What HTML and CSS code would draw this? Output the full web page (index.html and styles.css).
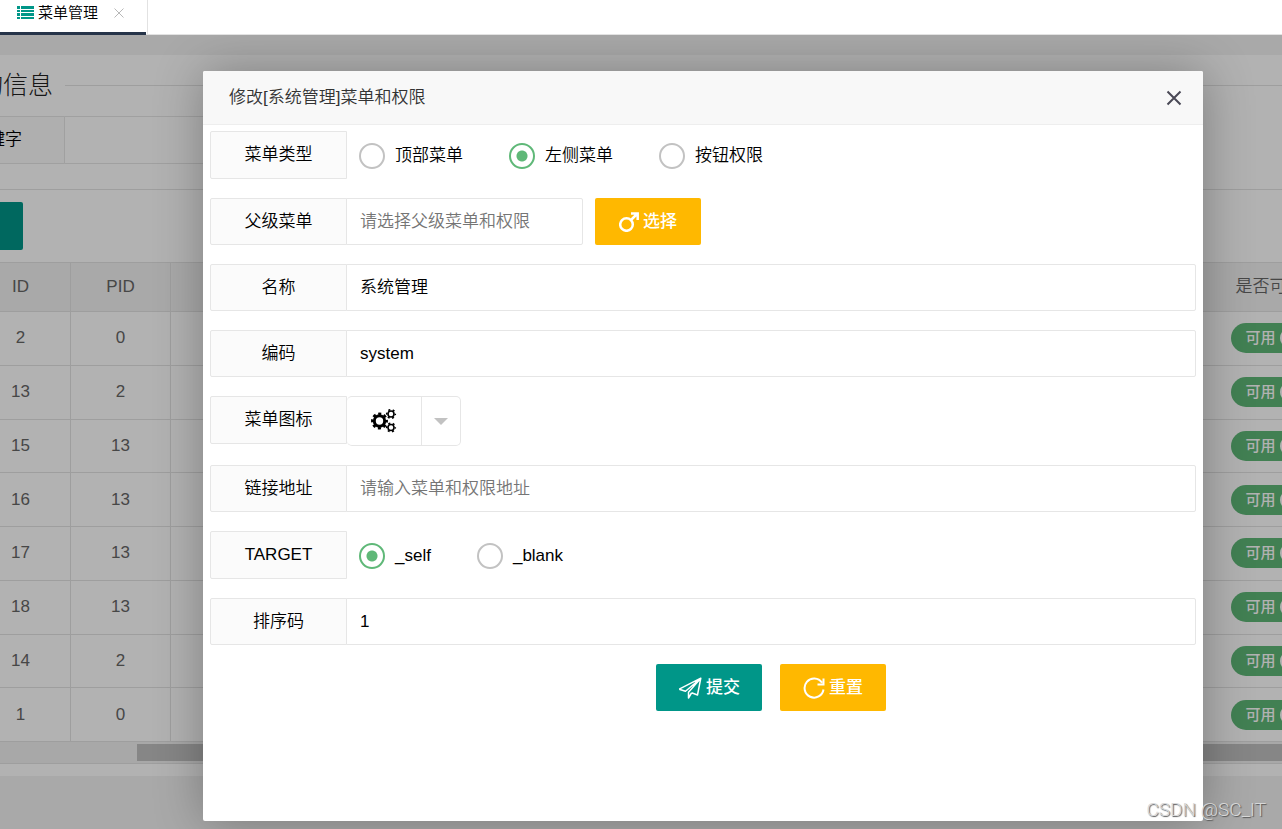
FILE: index.html
```html
<!DOCTYPE html>
<html lang="zh-CN">
<head>
<meta charset="utf-8">
<title>菜单管理</title>
<link rel="stylesheet" href="styles.css">
</head>
<body>
<nav class="tabs">
  <div class="tab">
    <svg class="tab-icon" viewBox="0 0 17 14" aria-hidden="true"><path d="M0 0h3v3H0zM4 0h13v3H4zM0 4h3v2H0zM4 4h13v2H4zM0 7h3v3H0zM4 7h13v3H4zM0 11h3v2H0zM4 11h13v2H4z"/></svg>
    <span>菜单管理</span>
    <button class="tab-close" type="button" aria-label="关闭标签"><svg viewBox="0 0 10 10"><path d="M0.5 0.5l9 9M9.500 0.5l-9 9"/></svg></button>
  </div>
</nav>
<main class="frame">
  <section class="card">
    <div class="card-inner">
      <h2 class="legend"><span>查询信息</span></h2>
      <div class="search">
        <label class="label search-label" for="kw">关键字</label>
        <input class="input" id="kw" type="text">
      </div>
      <hr class="rule">
      <button class="add" type="button" aria-label="添加"></button>
      <table class="grid">
        <colgroup><col class="c-check"><col class="c-id"><col class="c-id"><col><col class="c-state"></colgroup>
        <thead><tr><th></th><th>ID</th><th>PID</th><th></th><th>是否可用</th></tr></thead>
        <tbody>
          <tr><td></td><td>2</td><td>0</td><td></td><td><button type="button" class="switch">可用</button></td></tr>
          <tr><td></td><td>13</td><td>2</td><td></td><td><button type="button" class="switch">可用</button></td></tr>
          <tr><td></td><td>15</td><td>13</td><td></td><td><button type="button" class="switch">可用</button></td></tr>
          <tr><td></td><td>16</td><td>13</td><td></td><td><button type="button" class="switch">可用</button></td></tr>
          <tr><td></td><td>17</td><td>13</td><td></td><td><button type="button" class="switch">可用</button></td></tr>
          <tr><td></td><td>18</td><td>13</td><td></td><td><button type="button" class="switch">可用</button></td></tr>
          <tr><td></td><td>14</td><td>2</td><td></td><td><button type="button" class="switch">可用</button></td></tr>
          <tr><td></td><td>1</td><td>0</td><td></td><td><button type="button" class="switch">可用</button></td></tr>
        </tbody>
      </table>
      <div class="scrollbar"><div class="thumb"></div></div>
    </div>
  </section>
  <div class="overlay">
    <div class="dialog" role="dialog" aria-labelledby="dlg-title">
      <header class="dialog-head">
        <h1 id="dlg-title">修改[系统管理]菜单和权限</h1>
        <button class="dialog-close" type="button" aria-label="关闭"><svg viewBox="0 0 16 16"><path d="M1.500 1.500l13 13M14.500 1.500l-13 13"/></svg></button>
      </header>
      <form class="form">
        <div class="row row-radio" role="radiogroup" aria-labelledby="l-type">
          <span class="label" id="l-type">菜单类型</span>
          <div class="options">
            <label><input type="radio" name="type">顶部菜单</label>
            <label><input type="radio" name="type" checked>左侧菜单</label>
            <label><input type="radio" name="type">按钮权限</label>
          </div>
        </div>
        <div class="row">
          <label class="label" for="parent">父级菜单</label>
          <input class="input input-short" id="parent" type="text" placeholder="请选择父级菜单和权限">
          <button class="btn btn-warm btn-pick" type="button"><svg class="i-male" viewBox="0 0 20 20"><circle cx="7.500" cy="12.500" r="6.300"/><path d="M12 8l6-6M12 1.500h6.700v6.500"/></svg>选择</button>
        </div>
        <div class="row">
          <label class="label" for="name">名称</label>
          <input class="input" id="name" type="text" value="系统管理">
        </div>
        <div class="row">
          <label class="label" for="code">编码</label>
          <input class="input" id="code" type="text" value="system">
        </div>
        <div class="row row-icon">
          <span class="label" id="l-icon">菜单图标</span>
          <button class="picker" type="button" aria-labelledby="l-icon">
            <span class="picker-icon"><svg viewBox="0 0 26 24"><circle class="g1" cx="8.500" cy="12" r="5.200"/><circle class="t1" cx="8.500" cy="12" r="7.200"/><circle class="g2" cx="20" cy="5" r="3"/><circle class="t2" cx="20" cy="5" r="4.300"/><circle class="g2" cx="20" cy="18.500" r="3"/><circle class="t2" cx="20" cy="18.500" r="4.300"/></svg></span>
            <span class="picker-arrow"><svg viewBox="0 0 14 7"><path d="M0 0h14l-7 7z"/></svg></span>
          </button>
        </div>
        <div class="row">
          <label class="label" for="href">链接地址</label>
          <input class="input" id="href" type="text" placeholder="请输入菜单和权限地址">
        </div>
        <div class="row row-radio" role="radiogroup" aria-labelledby="l-target">
          <span class="label" id="l-target">TARGET</span>
          <div class="options">
            <label><input type="radio" name="target" checked>_self</label>
            <label><input type="radio" name="target">_blank</label>
          </div>
        </div>
        <div class="row">
          <label class="label" for="order">排序码</label>
          <input class="input" id="order" type="text" value="1">
        </div>
        <div class="actions">
          <button class="btn btn-main" type="button"><svg class="i-plane" viewBox="0 0 24 22"><path d="M1.200 12.200L22.800 1.200L19.500 18L13.500 15.800M1.200 12.200L7.500 14.300L22.800 1.200L10.500 15.300V21L13.500 16"/></svg>提交</button>
          <button class="btn btn-warm" type="reset"><svg class="i-line" viewBox="0 0 22 22"><path d="M20.500 12.500A9.500 9.500 0 1 1 19 5.800M20.500 1.500v6h-6"/></svg>重置</button>
        </div>
      </form>
    </div>
  </div>
</main>
<div class="watermark">CSDN @SC_IT</div>
</body>
</html>
```
FILE: styles.css
```css
* { box-sizing: border-box; }

body {
  margin: 0;
  min-height: 100vh;
  display: flex;
  flex-direction: column;
  overflow: hidden;
  position: relative;
  font-family: "Liberation Sans", "Noto Sans CJK SC", sans-serif;
  font-size: 17px;
  font-weight: 350;
  line-height: 24px;
  color: #000;
  background: #f2f2f2;
}

button, input { font: inherit; color: inherit; margin: 0; }
button { border: 0; padding: 0; cursor: pointer; }
svg { display: block; }

/* tab strip */
.tabs {
  height: 35px;
  display: flex;
  background: #fff;
  border-bottom: 1px solid #e2e2e2;
}
.tab {
  display: flex;
  align-items: center;
  gap: 4px;
  width: 148px;
  height: 35px;
  padding: 0 0 10px 17px;
  border-right: 1px solid #e2e2e2;
  font-size: 15px;
  background: linear-gradient(#263449, #263449) 0 100% / 146px 3px no-repeat;
}
.tab-icon { width: 17px; height: 14px; fill: #009688; }
.tab-close { margin-left: 12px; background: none; }
.tab-close svg { width: 10px; height: 10px; stroke: #b8b8b8; fill: none; }

/* page behind the dialog */
.frame { flex: 1; position: relative; overflow: hidden; padding-top: 20px; }
.card { background: #fff; padding-bottom: 12px; }
.card-inner { margin: 0 -58px 0 -72px; padding-top: 14px; }
.legend {
  display: flex;
  align-items: center;
  gap: 12px;
  margin: 0;
  padding-left: 25px;
  font-size: 25px;
  font-weight: 200;
  line-height: 33px;
  color: #222;
}
.legend::after { content: ""; flex: 1; border-top: 1px solid #e2e2e2; }
.search { display: flex; width: 60%; height: 48px; margin-top: 14px; }
.rule { margin: 25px 0 12px; border: 0; border-top: 1px solid #e2e2e2; }
.add { display: block; width: 95px; height: 48px; border-radius: 2px; background: #009688; }

.grid {
  width: 100%;
  height: 480px;
  margin-top: 12px;
  table-layout: fixed;
  border-collapse: collapse;
  color: #666;
  text-align: center;
}
.c-check { width: 42px; }
.c-id { width: 100px; }
.c-state { width: 140px; }
.grid th, .grid td { padding: 0; border: 1px solid #e2e2e2; }
.grid th { height: 49px; font-weight: 350; background: #f2f2f2; }
.grid tr > :last-child { border-left: 0; }
.switch {
  display: block;
  position: relative;
  width: 78px;
  height: 30px;
  margin: 0 auto;
  padding-left: 15px;
  border-radius: 15px;
  background: #5fb878;
  color: #fff;
  font-size: 15px;
  font-weight: 500;
  text-align: left;
}
.switch::after {
  content: "";
  position: absolute;
  top: 5px;
  right: 9px;
  width: 20px;
  height: 20px;
  border-radius: 50%;
  background: #fff;
}
.scrollbar { height: 22px; padding: 2px 0 3px 209px; background: #f1f1f1; border-bottom: 1px solid #e2e2e2; }
.thumb { height: 17px; background: #c1c1c1; }

/* dialog */
.overlay {
  position: absolute;
  inset: 0;
  display: flex;
  padding: 36px 79px 8px 203px;
  background: rgba(0, 0, 0, .3);
}
.dialog {
  flex: 1;
  min-width: 0;
  background: #fff;
  border-radius: 2px;
  box-shadow: 1px 1px 50px rgba(0, 0, 0, .3);
}
.dialog-head {
  display: flex;
  justify-content: space-between;
  align-items: center;
  height: 54px;
  padding: 0 21px 0 26px;
  border-bottom: 1px solid #eee;
  border-radius: 2px 2px 0 0;
  background: #f8f8f8;
}
.dialog-head h1 { margin: 0; font-size: 17px; font-weight: 350; color: #333; }
.dialog-close { background: none; }
.dialog-close svg { width: 16px; height: 16px; stroke: #4a4956; stroke-width: 2; fill: none; }

.form { display: flex; flex-direction: column; gap: 19px; padding: 6px 7px; }
.row { display: flex; height: 47px; }
.row-radio { height: 48px; }
.row-icon { height: 50px; }
.row-icon .label { height: 48px; }
.label {
  flex: none;
  display: flex;
  align-items: center;
  justify-content: center;
  width: 137px;
  border: 1px solid #e6e6e6;
  border-radius: 2px 0 0 2px;
  background: #fbfbfb;
}
.input {
  flex: 1;
  min-width: 0;
  margin-left: -1px;
  padding: 0 13px;
  border: 1px solid #e6e6e6;
  border-radius: 0 2px 2px 0;
  background: #fff;
}
.input::placeholder { color: #757575; opacity: 1; }
.input-short { flex: 0 0 237px; }

.options { display: flex; align-items: center; gap: 46px; padding: 1px 0 0 12px; }
.options label { display: flex; align-items: center; gap: 10px; }
.options input {
  appearance: none;
  width: 26px;
  height: 26px;
  border: 2px solid #c2c2c2;
  border-radius: 50%;
}
.options input:checked {
  border-color: #5fb878;
  background: radial-gradient(circle, #5fb878 5px, transparent 6px);
}

.btn {
  display: flex;
  align-items: center;
  justify-content: center;
  gap: 4px;
  width: 106px;
  height: 47px;
  border-radius: 2px;
  color: #fff;
  font-weight: 500;
}
.btn svg { fill: none; stroke: #fff; }
.btn-main { background: #009688; }
.btn-warm { background: #ffb800; }
.btn-pick { margin-left: 12px; }
.i-male { width: 20px; height: 20px; stroke-width: 2.5; }
.i-line { width: 22px; height: 22px; stroke-width: 2; }
.i-plane { width: 24px; height: 22px; stroke-width: 1.5; stroke-linejoin: round; }
.actions { display: flex; justify-content: center; gap: 18px; padding-left: 136px; }

.picker {
  display: flex;
  width: 114px;
  border: 1px solid #e6e6e6;
  border-left: 0;
  border-radius: 5px;
  background: #fff;
}
.picker-icon, .picker-arrow { display: flex; align-items: center; justify-content: center; height: 100%; }
.picker-icon { flex: 1; }
.picker-arrow { width: 39px; border-left: 1px solid #e6e6e6; }
.picker-icon svg { width: 26px; height: 24px; fill: none; stroke: #000; }
.picker-arrow svg { width: 14px; height: 7px; fill: #c2c2c2; }
.g1 { stroke-width: 3; }
.t1 { stroke-width: 2.5; stroke-dasharray: 3 2.655; stroke-dashoffset: 1.5; }
.g2 { stroke-width: 1.6; }
.t2 { stroke-width: 1.6; stroke-dasharray: 2 2.503; stroke-dashoffset: 1; }

.watermark {
  position: absolute;
  right: 16px;
  bottom: 7px;
  font-family: Roboto, sans-serif;
  font-size: 19px;
  color: #d8d8d8;
  text-shadow: 1px 1px 1px #555;
}
```
